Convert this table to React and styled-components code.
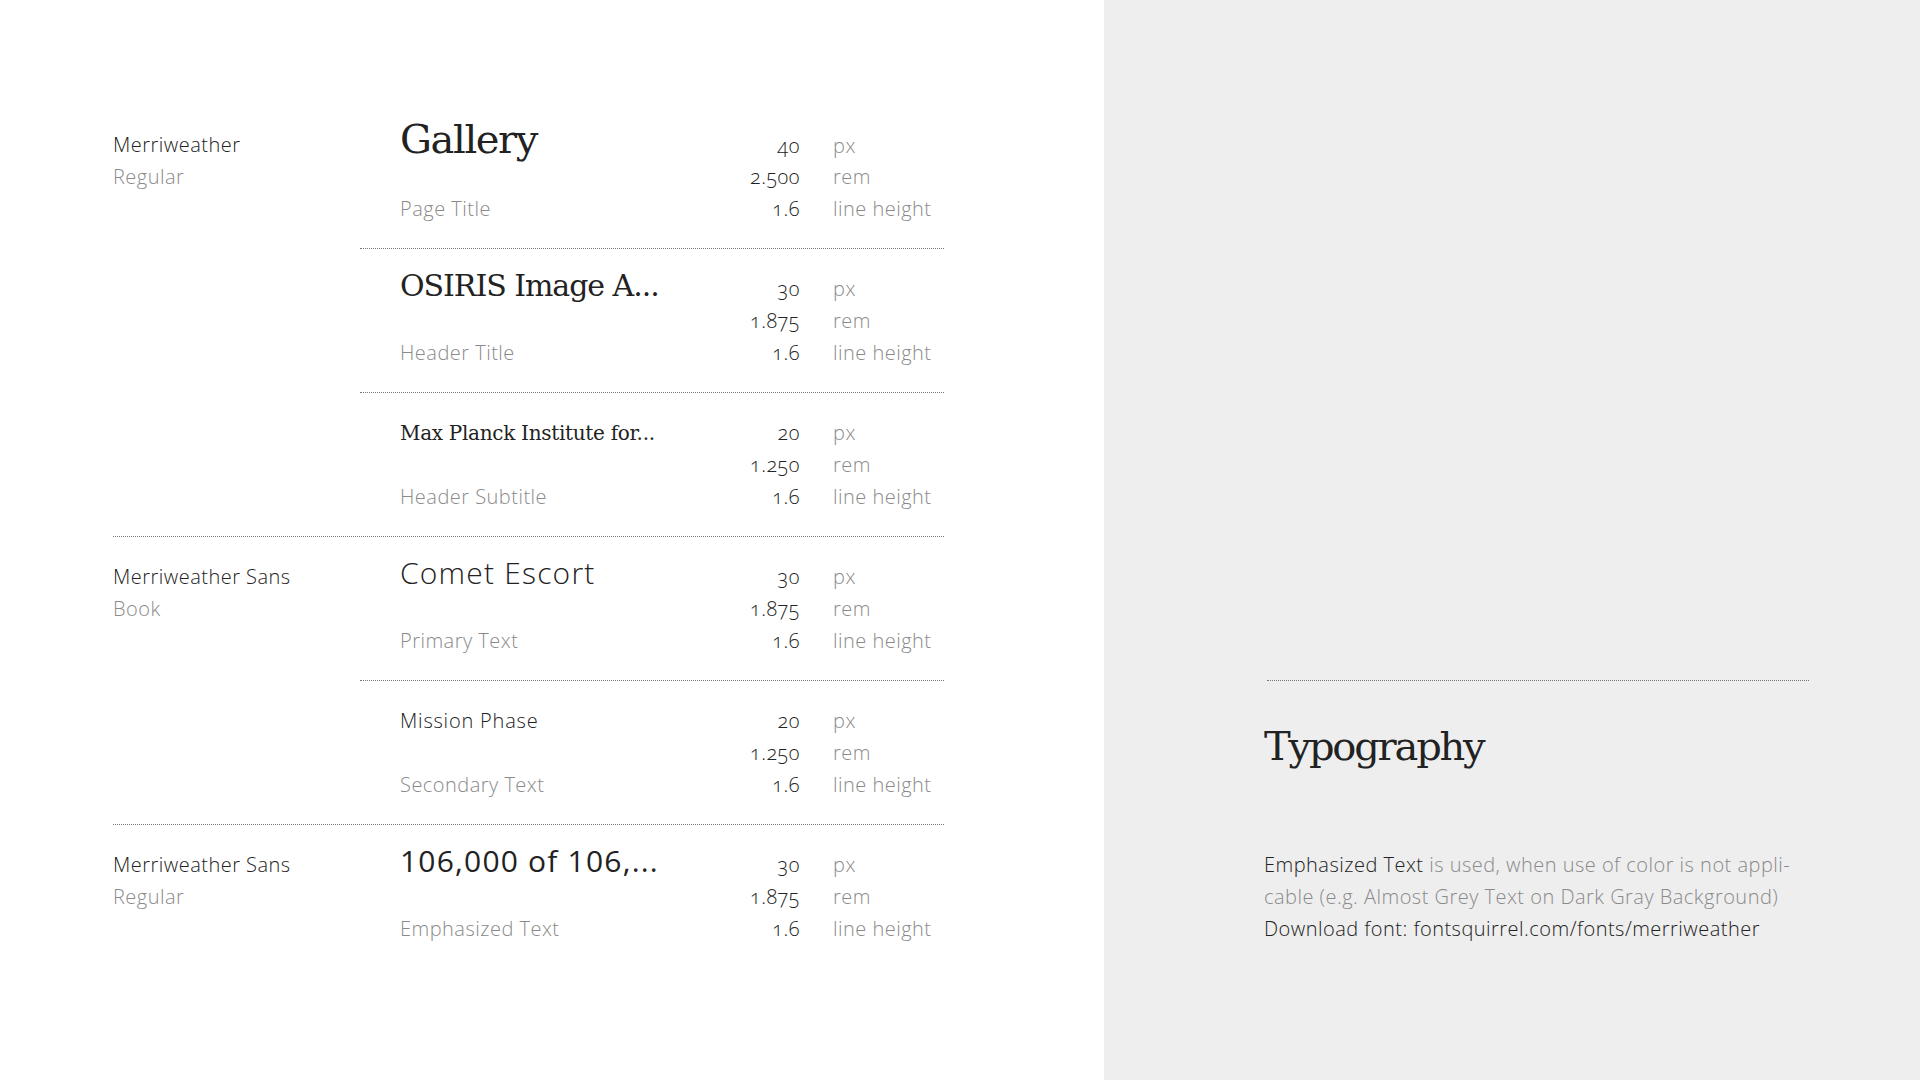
import React from "react";
import styled, { createGlobalStyle } from "styled-components";

const SANS = '"Open Sans", "Noto Sans", sans-serif';
const SERIF = '"DejaVu Serif", "Liberation Serif", serif';

const GlobalStyle = createGlobalStyle`
  html, body {
    margin: 0;
    padding: 0;
  }
  body {
    font-family: ${SANS};
    font-weight: 300;
    letter-spacing: 0.03em;
    color: #222;
    background: #fff;
  }
`;

// families with their sample entries
const families = [
  {
    name: "Merriweather",
    style: "Regular",
    serif: true,
    entries: [
      { sample: "Gallery", px: 40, rem: "2.500", role: "Page Title" },
      { sample: "OSIRIS Image A...", px: 30, rem: "1.875", role: "Header Title" },
      { sample: "Max Planck Institute for...", px: 20, rem: "1.250", role: "Header Subtitle" },
    ],
  },
  {
    name: "Merriweather Sans",
    style: "Book",
    weight: 300,
    entries: [
      { sample: "Comet Escort", px: 30, rem: "1.875", role: "Primary Text" },
      { sample: "Mission Phase", px: 20, rem: "1.250", role: "Secondary Text" },
    ],
  },
  {
    name: "Merriweather Sans",
    style: "Regular",
    weight: 400,
    entries: [
      { sample: "106,000 of 106,...", px: 30, rem: "1.875", role: "Emphasized Text" },
    ],
  },
];

function App() {
  return (
    <>
      <GlobalStyle />
      <Page>
        <Sheet>
          {families.map((family, i) => (
            <Family key={i} $last={i === families.length - 1}>
              <FamilyLabel>
                <Line>{family.name}</Line>
                <Line $muted>{family.style}</Line>
              </FamilyLabel>

              <Entries>
                {family.entries.map((entry, j) => (
                  <Entry key={j} $last={j === family.entries.length - 1}>
                    <Sample
                      $size={entry.px}
                      $serif={family.serif}
                      $weight={family.weight}
                    >
                      {entry.sample}
                    </Sample>
                    <Value>{entry.px}</Value>
                    <Unit>px</Unit>

                    <Blank />
                    <Value>{entry.rem}</Value>
                    <Unit>rem</Unit>

                    <Role>{entry.role}</Role>
                    <Value>1.6</Value>
                    <Unit>line height</Unit>
                  </Entry>
                ))}
              </Entries>
            </Family>
          ))}
        </Sheet>

        <Aside>
          <Rule />
          <Title>Typography</Title>
          <Note>
            <strong>Emphasized Text</strong> is used, when use of color is not appli-
            <br />
            cable (e.g. Almost Grey Text on Dark Gray Background)
            <br />
            <strong>Download font: fontsquirrel.com/fonts/merriweather</strong>
          </Note>
        </Aside>
      </Page>
    </>
  );
}

export default App;

const Page = styled.div`
  display: flex;
  width: 100%;
  height: 100vh;
  overflow: hidden;
`;

// --------------------------------- left sheet

const Sheet = styled.main`
  width: 1104px;
  flex-shrink: 0;
  box-sizing: border-box;
  padding: 105px 0 0 113px;
  background: #fff;
`;

const Family = styled.section`
  display: flex;
  width: 831px;
  border-bottom: ${(p) => (p.$last ? "none" : "1px dotted #777")};
`;

const FamilyLabel = styled.div`
  width: 247px;
  flex-shrink: 0;
  padding-top: 24px;
`;

const Line = styled.div`
  font-size: 20px;
  line-height: 32px;
  color: ${(p) => (p.$muted ? "#8a8a8a" : "#222")};
`;

const Entries = styled.div`
  flex: 1;
`;

const Entry = styled.div`
  display: grid;
  grid-template-columns: 280px 120px 1fr;
  grid-template-rows: repeat(3, 32px);
  align-items: baseline;
  padding: 24px 0 23px 40px;
  border-bottom: ${(p) => (p.$last ? "none" : "1px dotted #777")};
  font-size: 20px;
  line-height: 32px;
`;

// serif samples run wider than the original face, so pull them in a bit
const Sample = styled.div`
  font-family: ${(p) => (p.$serif ? SERIF : SANS)};
  font-weight: ${(p) => p.$weight || 400};
  font-size: ${(p) => p.$size}px;
  letter-spacing: ${(p) =>
    p.$serif ? (p.$size >= 30 ? "-0.035em" : "-0.015em") : "0.04em"};
  line-height: 20px;
  color: #222;
  white-space: nowrap;
`;

const Blank = styled.div``;

const Role = styled.div`
  color: #8a8a8a;
  white-space: nowrap;
`;

const Value = styled.div`
  text-align: right;
  color: #222;
  font-variant-numeric: oldstyle-nums;
`;

const Unit = styled.div`
  padding-left: 33px;
  color: #8a8a8a;
  white-space: nowrap;
`;

// --------------------------------- right aside

const Aside = styled.aside`
  flex: 1;
  background: #eeeeee;
  padding: 680px 0 0 160px;
`;

const Rule = styled.div`
  width: 542px;
  margin-left: 3px;
  border-top: 1px dotted #777;
`;

const Title = styled.h1`
  margin: 33px 0 0;
  font-family: ${SERIF};
  font-weight: 400;
  font-size: 40px;
  letter-spacing: -0.055em;
  line-height: 64px;
  color: #222;
`;

const Note = styled.p`
  margin: 71px 0 0;
  width: 580px;
  font-size: 20px;
  line-height: 32px;
  color: #8a8a8a;
  white-space: nowrap;

  > strong {
    font-weight: 300;
    color: #222;
  }
`;
